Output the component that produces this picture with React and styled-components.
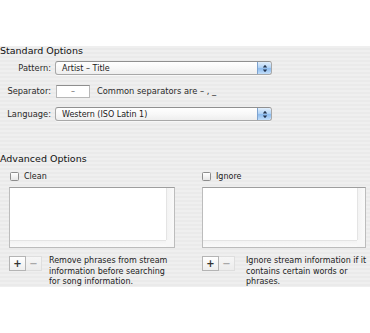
import React from "react";
import styled, { createGlobalStyle } from "styled-components";

const Global = createGlobalStyle`
  html, body { margin: 0; padding: 0; background: #ffffff; }
  body { font-family: "DejaVu Sans", "Noto Sans", sans-serif; color: #1e1e1e; }
`;

const Panel = styled.div`
  margin-top: 46px;
  height: 241px;
  overflow: hidden;
  box-sizing: border-box;
  display: flex;
  flex-direction: column;
  background: repeating-linear-gradient(
    to bottom,
    #efefef 0px,
    #efefef 2px,
    #eaeaea 2px,
    #eaeaea 4px
  );
`;

const SectionTitle = styled.div`
  font-size: 9.5px;
  line-height: 10px;
  height: 10px;
  color: #111;
  margin-top: ${(p) => p.$top || 0}px;
`;

const FormRows = styled.div`
  display: flex;
  flex-direction: column;
  gap: 9px;
  margin-top: 5px;
`;

const FormRow = styled.div`
  display: flex;
  align-items: center;
  height: 14px;
`;

const Label = styled.div`
  width: 51px;
  text-align: right;
  font-size: 8.3px;
  color: #2a2a2a;
  margin-right: 4px;
  flex: none;
`;

const Popup = styled.div`
  width: 217px;
  height: 14px;
  box-sizing: border-box;
  border: 1px solid #a8a8a8;
  border-top-color: #909090;
  border-radius: 3px;
  background: linear-gradient(to bottom, #ffffff 0%, #f8f8f8 50%, #eeeeee 100%);
  display: flex;
  align-items: center;
  justify-content: space-between;
  overflow: hidden;
  box-shadow: 0 1px 0 rgba(255, 255, 255, 0.6);
`;

const PopupText = styled.span`
  font-size: 8px;
  color: #1a1a1a;
  padding-left: 6px;
  white-space: nowrap;
`;

const Stepper = styled.div`
  width: 14px;
  height: 100%;
  box-sizing: border-box;
  border-left: 1px solid #7ea3cf;
  border-radius: 0 2px 2px 0;
  background: linear-gradient(
    to bottom,
    #e2effc 0%,
    #b3d4f6 45%,
    #8dbcef 55%,
    #c3def9 100%
  );
  display: flex;
  align-items: center;
  justify-content: center;
`;

const TextField = styled.div`
  width: 34px;
  height: 13px;
  box-sizing: border-box;
  margin-left: 1px;
  border: 1px solid #b8b8b8;
  border-top-color: #8e8e8e;
  background: #ffffff;
  font-size: 8px;
  color: #666;
  display: flex;
  align-items: center;
  justify-content: center;
`;

const Hint = styled.span`
  font-size: 8.3px;
  color: #2a2a2a;
  margin-left: 7px;
  white-space: nowrap;
`;

const Columns = styled.div`
  display: grid;
  grid-template-columns: 166px 164px;
  column-gap: 27px;
  padding-left: 9px;
  margin-top: 7px;
`;

const Column = styled.div`
  display: flex;
  flex-direction: column;
`;

const CheckRow = styled.label`
  display: flex;
  align-items: center;
  height: 10px;
  padding-left: ${(p) => p.$indent || 0}px;
  font-size: 8px;
  color: #222;
`;

const CheckBox = styled.span`
  width: 9px;
  height: 9px;
  box-sizing: border-box;
  border: 1px solid #8c8c8c;
  border-radius: 1.5px;
  background: linear-gradient(to bottom, #ffffff, #e6e6e6);
  margin-right: 5px;
  flex: none;
`;

const ListBox = styled.div`
  margin-top: 6px;
  height: 61px;
  box-sizing: border-box;
  border: 1px solid #bcbcbc;
  border-top-color: #9e9e9e;
  background: #ffffff;
  display: grid;
  grid-template-columns: 1fr 8px;
  grid-template-rows: 1fr 7px;
`;

const ListContent = styled.div`
  background: #ffffff;
`;

const VTrack = styled.div`
  border-left: 1px solid #e4e4e4;
  background: linear-gradient(to right, #f3f3f3, #fafafa);
`;

const HTrack = styled.div`
  border-top: 1px solid #e4e4e4;
  background: linear-gradient(to bottom, #f3f3f3, #fafafa);
`;

const Corner = styled.div`
  background: #f7f7f7;
`;

const Footer = styled.div`
  display: flex;
  align-items: flex-start;
  margin-top: 8px;
`;

const ButtonGroup = styled.div`
  display: flex;
  flex: none;
  margin-right: ${(p) => p.$gap}px;
`;

const SquareButton = styled.div`
  width: ${(p) => p.$w}px;
  height: 15px;
  box-sizing: border-box;
  border: 1px solid ${(p) => (p.$disabled ? "#dedede" : "#b4b4b4")};
  background: ${(p) =>
    p.$disabled
      ? "linear-gradient(to bottom, #f6f6f6, #ececec)"
      : "linear-gradient(to bottom, #ffffff, #eeeeee)"};
  color: ${(p) => (p.$disabled ? "#a8a8a8" : "#333")};
  font-size: 10px;
  line-height: 13px;
  text-align: center;
  font-weight: bold;
  & + & {
    border-left: none;
  }
`;

const Description = styled.div`
  font-size: 8px;
  line-height: 10.5px;
  color: #222;
  white-space: nowrap;
`;

function UpDown() {
  return (
    <svg width="6" height="9" viewBox="0 0 6 9">
      <path d="M3 0.8 L5.2 3.4 H0.8 Z" fill="#23344f" />
      <path d="M3 8.2 L5.2 5.6 H0.8 Z" fill="#23344f" />
    </svg>
  );
}

function PopupMenu({ value }) {
  return (
    <Popup>
      <PopupText>{value}</PopupText>
      <Stepper>
        <UpDown />
      </Stepper>
    </Popup>
  );
}

function FilterColumn({ label, indent, gap, lines }) {
  return (
    <Column>
      <CheckRow $indent={indent}>
        <CheckBox />
        {label}
      </CheckRow>
      <ListBox>
        <ListContent />
        <VTrack />
        <HTrack />
        <Corner />
      </ListBox>
      <Footer>
        <ButtonGroup $gap={gap}>
          <SquareButton $w={17}>+</SquareButton>
          <SquareButton $w={16} $disabled>
            −
          </SquareButton>
        </ButtonGroup>
        <Description>
          {lines.map((l, i) => (
            <React.Fragment key={i}>
              {l}
              {i < lines.length - 1 && <br />}
            </React.Fragment>
          ))}
        </Description>
      </Footer>
    </Column>
  );
}

export default function App() {
  return (
    <>
      <Global />
      <Panel>
        <SectionTitle>Standard Options</SectionTitle>
        <FormRows>
          <FormRow>
            <Label>Pattern:</Label>
            <PopupMenu value="Artist – Title" />
          </FormRow>
          <FormRow>
            <Label>Separator:</Label>
            <TextField>–</TextField>
            <Hint>Common separators are – , _</Hint>
          </FormRow>
          <FormRow>
            <Label>Language:</Label>
            <PopupMenu value="Western (ISO Latin 1)" />
          </FormRow>
        </FormRows>
        <SectionTitle $top={33}>Advanced Options</SectionTitle>
        <Columns>
          <FilterColumn
            label="Clean"
            indent={1}
            gap={7}
            lines={[
              "Remove phrases from stream",
              "information before searching",
              "for song information.",
            ]}
          />
          <FilterColumn
            label="Ignore"
            indent={0}
            gap={11}
            lines={[
              "Ignore stream information if it",
              "contains certain words or",
              "phrases.",
            ]}
          />
        </Columns>
      </Panel>
    </>
  );
}
